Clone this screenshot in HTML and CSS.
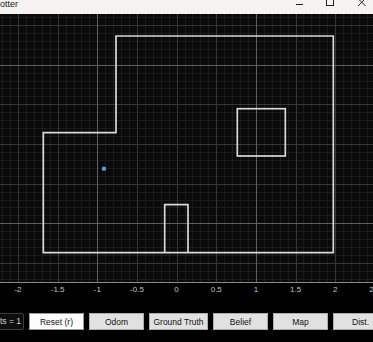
FILE: index.html
```html
<!DOCTYPE html>
<html lang="en">
<head>
<meta charset="UTF-8">
<title>Plotter</title>
<link rel="stylesheet" href="styles.css">
</head>
<body>

<div class="titlebar">
    <span class="title">Plotter</span>
    <svg class="controls" width="80" height="14" viewBox="293 0 80 14">
        <path d="M296 4.5 H303" stroke="#222" stroke-width="1"/>
        <rect x="326.5" y="-1.5" width="7" height="7" fill="none" stroke="#222" stroke-width="1"/>
        <path d="M358 -1.5 L365.5 6 M365.5 -1.5 L358 6" stroke="#222" stroke-width="1"/>
    </svg>
</div>

<svg class="plot" width="373" height="286" viewBox="0 14 373 286">
    <rect x="0" y="14" width="373" height="268" fill="#0a0a0a"/>
    <g id="grid"></g>
    <line x1="0" y1="282.5" x2="373" y2="282.5" stroke="#8a8a8a" stroke-width="1"/>

    <!-- mapa -->
    <g fill="none" stroke="#d9d9d9" stroke-width="1.7">
        <path d="M116 36 H333.3 V252.7 H43.3 V132.7 H116 Z"/>
        <rect x="237.3" y="108.7" width="48" height="47.3"/>
        <path d="M164.7 252.7 V204.7 H188 V252.7"/>
    </g>

    <!-- robô -->
    <circle cx="104" cy="168.7" r="2.2" fill="#5b9bd5"/>

    <g id="labels" class="axis-labels"></g>
</svg>

<div class="toolbar">
    <div class="field">pts = 1</div>
    <button class="btn default">Reset (r)</button>
    <button class="btn">Odom</button>
    <button class="btn wide">Ground Truth</button>
    <button class="btn">Belief</button>
    <button class="btn">Map</button>
    <button class="btn">Dist.</button>
</div>

<script>
    // Centro do gráfico e escala (pixels por unidade)
    var x0 = 176.6;
    var y0 = 144;
    var unit = 79.3;
    var ns = 'http://www.w3.org/2000/svg';

    function addLine(x1, y1, x2, y2, color) {
        var line = document.createElementNS(ns, 'line');
        line.setAttribute('x1', x1);
        line.setAttribute('y1', y1);
        line.setAttribute('x2', x2);
        line.setAttribute('y2', y2);
        line.setAttribute('stroke', color);
        line.setAttribute('stroke-width', 1);
        document.getElementById('grid').appendChild(line);
    }

    // Cor da linha conforme o valor
    function lineColor(i) {
        if (i % 10 === 0 && Math.abs(i / 10) % 2 === 1) return '#5e5e5e';
        if (i % 5 === 0) return '#363636';
        return '#1a1a1a';
    }

    // Desenha a grade: primeiro as linhas finas, depois as mais fortes
    function drawGrid() {
        var passes = ['#1a1a1a', '#363636', '#5e5e5e'];
        passes.forEach(function(pass) {
            for (var i = -30; i <= 30; i++) {
                if (lineColor(i) !== pass) continue;
                var px = Math.round(x0 + unit * i / 10) + 0.5;
                var py = Math.round(y0 - unit * i / 10) + 0.5;
                addLine(px, 14, px, 282, pass);
                if (py > 14 && py < 282) addLine(0, py, 373, py, pass);
            }
        });
    }

    // Rótulos do eixo x
    function drawLabels() {
        var labels = document.getElementById('labels');
        for (var v = -2; v <= 2.5; v += 0.5) {
            var text = document.createElementNS(ns, 'text');
            text.setAttribute('x', x0 + unit * v);
            text.setAttribute('y', 292);
            text.setAttribute('text-anchor', 'middle');
            text.textContent = String(v);
            labels.appendChild(text);
        }
    }

    drawGrid();
    drawLabels();
</script>

</body>
</html>
```

FILE: styles.css
```css
body {
    margin: 0;
    padding: 0;
    width: 373px;
    height: 342px;
    overflow: hidden;
    background-color: #000000;
    font-family: "Liberation Sans", Arial, sans-serif;
}

.titlebar {
    height: 14px;
    display: flex;
    justify-content: space-between;
    background-color: #f7f2f2;
    overflow: hidden;
}

.title {
    margin-left: -8px;
    font-size: 9px;
    line-height: 9px;
    color: #222222;
}

.controls {
    display: block;
}

.plot {
    display: block;
}

.axis-labels {
    font-size: 8px;
    fill: #c4c4c4;
}

.toolbar {
    display: flex;
    gap: 5px;
    margin-top: 13px;
    height: 17px;
}

.field {
    flex: none;
    box-sizing: border-box;
    width: 40px;
    margin-left: -16px;
    padding-right: 2px;
    border: 1px solid #3c3c3c;
    border-radius: 2px;
    background-color: #0e0e0e;
    color: #cfcfcf;
    font-size: 8.5px;
    line-height: 15px;
    text-align: right;
}

.btn {
    flex: none;
    box-sizing: border-box;
    width: 55px;
    height: 17px;
    padding: 0;
    border: 1px solid #adadad;
    background-color: #e1e1e1;
    color: #111111;
    font-family: "Liberation Sans", Arial, sans-serif;
    font-size: 8.5px;
}

.btn.default {
    background-color: #fdfdfd;
    border-color: #9a9a9a;
}

.btn.wide {
    width: 59px;
}
```
